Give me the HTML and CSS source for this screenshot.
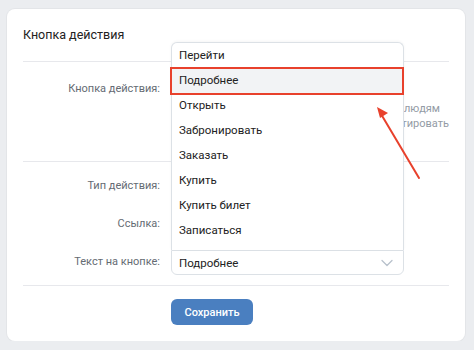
FILE: index.html
```html
<!DOCTYPE html>
<html lang="ru">
  <head>
    <meta charset="UTF-8" />
    <meta name="viewport" content="width=device-width, initial-scale=1.0" />
    <title>Кнопка действия</title>
    <link rel="stylesheet" href="styles.css">
  </head>
  <body>
    <div class="card">
      <h2 class="card-title">Кнопка действия</h2>

      <div class="section section-top">
        <div class="form-row">
          <label class="form-label">Кнопка действия:</label>
          <div class="form-control">
            <div class="field"></div>
            <div class="hint">
              <div class="hint-line hint-first">Показывать кнопку людям</div>
              <div class="hint-line">Можно редактировать</div>
            </div>
          </div>
        </div>
      </div>

      <div class="section section-fields">
        <div class="form-row">
          <label class="form-label">Тип действия:</label>
          <div class="form-control"><div class="field"></div></div>
        </div>
        <div class="form-row">
          <label class="form-label">Ссылка:</label>
          <div class="form-control"><div class="field"></div></div>
        </div>
        <div class="form-row">
          <label class="form-label">Текст на кнопке:</label>
          <div class="form-control">
            <div class="select-wrap">
              <ul class="dropdown">
                <li>Перейти</li>
                <li class="active">Подробнее</li>
                <li>Открыть</li>
                <li>Забронировать</li>
                <li>Заказать</li>
                <li>Купить</li>
                <li>Купить билет</li>
                <li>Записаться</li>
              </ul>
              <div class="select">
                <span>Подробнее</span>
                <svg class="chevron" width="12" height="8" viewBox="0 0 12 8">
                  <path d="M1 1.5l5 5 5-5" fill="none" stroke="#b8c1cc" stroke-width="1.3" stroke-linecap="round" stroke-linejoin="round"/>
                </svg>
              </div>
            </div>
          </div>
        </div>
      </div>

      <div class="card-footer">
        <button class="btn-save">Сохранить</button>
      </div>

      <svg class="pointer" width="60" height="80" viewBox="0 0 60 80">
        <line x1="52" y1="78" x2="14" y2="14" stroke="#e8412c" stroke-width="2" stroke-linecap="round"/>
        <path d="M10 7l11 6-8 5z" fill="#e8412c"/>
      </svg>
    </div>
  </body>
</html>
```

FILE: styles.css
```css
body {
  margin: 0;
  background-color: #ebedf0;
  font-family: Roboto, "Liberation Sans", Arial, sans-serif;
  font-size: 11.5px;
  color: #222;
}

.card {
  position: relative;
  margin: 9px 0 0 7px;
  width: 458px;
  height: 332px;
  box-sizing: border-box;
  padding: 0 16px;
  background-color: white;
  border-radius: 8px;
  box-shadow: 0 0 0 1px #e3e5e8;
}

.card-title {
  margin: 0;
  height: 52px;
  line-height: 52px;
  font-size: 12.5px;
  font-weight: 400;
  color: #222;
  border-bottom: 1px solid #e7e8ec;
}

.section {
  border-bottom: 1px solid #e7e8ec;
}

.section-top {
  padding: 15px 0 30px;
}

.section-fields {
  display: flex;
  flex-direction: column;
  gap: 14px;
  padding: 12px 0 10px;
}

.form-row {
  display: flex;
  align-items: flex-start;
  gap: 11px;
}

.form-label {
  width: 137px;
  flex-shrink: 0;
  text-align: right;
  line-height: 24px;
  font-size: 11px;
  color: #656b73;
}

.form-control {
  flex: 1;
}

.field {
  width: 233px;
  height: 24px;
  box-sizing: border-box;
  border: 1px solid #d3d9de;
  border-radius: 4px;
}

.hint {
  display: flex;
  flex-direction: column;
  align-items: flex-end;
  color: #939ba5;
  font-size: 11px;
  line-height: 15px;
  white-space: nowrap;
}

.hint-first {
  margin-right: 9px;
}

.select-wrap {
  position: relative;
  width: 233px;
}

.select {
  display: flex;
  align-items: center;
  justify-content: space-between;
  height: 25px;
  box-sizing: border-box;
  padding: 0 10px 0 7px;
  border: 1px solid #dce1e6;
  border-radius: 0 0 6px 6px;
  background-color: white;
}

.dropdown {
  position: absolute;
  left: 0;
  right: 0;
  bottom: 100%;
  margin: 0;
  padding: 0 0 7px;
  list-style: none;
  background-color: white;
  border: 1px solid #dce1e6;
  border-bottom: none;
  border-radius: 6px 6px 0 0;
  box-shadow: 0 -1px 3px rgba(0, 0, 0, 0.04);
  z-index: 2;
}

.dropdown li {
  position: relative;
  height: 25px;
  line-height: 25px;
  padding: 0 7px;
}

.dropdown li.active {
  background-color: #f2f3f5;
}

.dropdown li.active::after {
  content: "";
  position: absolute;
  top: -1px;
  left: -2px;
  right: -1px;
  bottom: -2px;
  border: 2px solid #e8412c;
}

.card-footer {
  padding: 13px 0 0 148px;
}

.btn-save {
  height: 26px;
  width: 82px;
  padding: 0;
  border: none;
  border-radius: 6px;
  background-color: #4a7fc0;
  color: white;
  font-family: inherit;
  font-size: 11px;
  font-weight: 500;
}

.pointer {
  position: absolute;
  left: 360px;
  top: 91px;
  z-index: 3;
}
```
